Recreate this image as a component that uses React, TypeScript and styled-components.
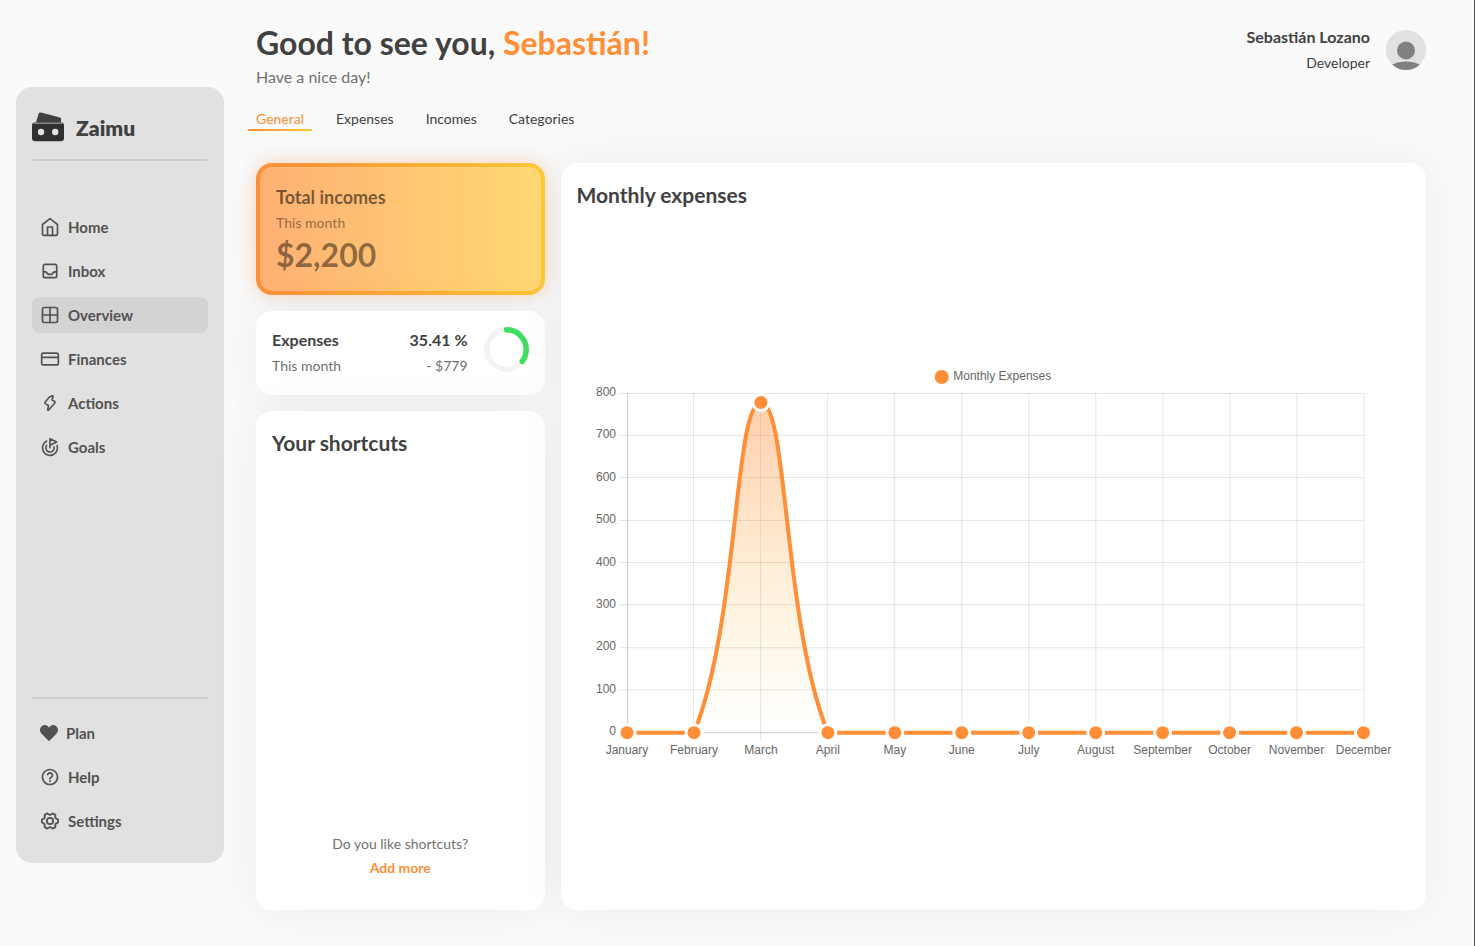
import React from "react";
import styled, { createGlobalStyle } from "styled-components";
import { FiHome } from "react-icons/fi";
import { TbInbox } from "react-icons/tb";
import { LuGrid2X2, LuCreditCard, LuGoal } from "react-icons/lu";
import { FaHeart } from "react-icons/fa";
import { MdHelpOutline } from "react-icons/md";
import { PiGearSixBold } from "react-icons/pi";

const ink = "#414141";
const orange = "#ff8e37";
const yellow = "#ffc837";

const GlobalStyle = createGlobalStyle`
  *, *::before, *::after { box-sizing: border-box; }
  body {
    margin: 0;
    background: #fafafa;
    color: ${ink};
    font-family: Lato, "Open Sans", sans-serif;
    font-size: 14px;
  }
  h1, h2, h3, p, ul { margin: 0; padding: 0; }
  ul { list-style: none; }
  a { color: inherit; text-decoration: none; }
`;

const Page = styled.div`
  display: grid;
  grid-template-columns: 224px minmax(0, 1fr);
  min-height: 100vh;
  border-right: 1px solid #505050;
`;

/* Sidebar */

const Sidebar = styled.aside`
  display: flex;
  flex-direction: column;
  margin: 87px 0 83px 16px;
  padding: 24px 16px;
  border-radius: 16px;
  background: #e1e1e1;
`;

const Brand = styled.a`
  display: flex;
  align-items: center;
  gap: 12px;
  height: 32px;
  margin-bottom: 16px;
  font-size: 21px;
  font-weight: 800;
`;

const Divider = styled.hr`
  width: 100%;
  height: 2px;
  margin: 0;
  border: 0;
  border-radius: 2px;
  background: #cdcdcd;
`;

const Nav = styled.nav<{ $bottom?: boolean }>`
  margin-top: ${(p) => (p.$bottom ? "auto" : "48px")};
`;

const NavList = styled.ul<{ $spaced?: boolean }>`
  display: flex;
  flex-direction: column;
  gap: 8px;
  margin-top: ${(p) => (p.$spaced ? "16px" : "0")};
`;

const NavLink = styled.a<{ $active?: boolean }>`
  display: flex;
  align-items: center;
  gap: 8px;
  height: 36px;
  padding: 0 8px;
  border-radius: 8px;
  background: ${(p) => (p.$active ? "#d3d3d3" : "transparent")};
  color: #525252;
  font-size: 15px;
  font-weight: 700;
`;

/* Main column */

const Main = styled.main`
  display: flex;
  flex-direction: column;
  padding: 24px 48px 36px 32px;
`;

const Header = styled.header`
  display: flex;
  justify-content: space-between;
  align-items: flex-start;
`;

const Title = styled.h1`
  font-size: 32px;
  font-weight: 700;
  line-height: 38px;
`;

const Accent = styled.span`
  color: ${orange};
`;

const Greeting = styled.p`
  color: #707070;
  font-size: 16px;
  line-height: 30px;
`;

const User = styled.div`
  display: flex;
  align-items: center;
  gap: 16px;
  text-align: right;
  line-height: 26px;
`;

const UserName = styled.p`
  font-size: 16px;
  font-weight: 700;
`;

const Avatar = styled.svg`
  display: block;
  border-radius: 50%;
`;

const Tabs = styled.nav`
  display: flex;
  gap: 16px;
  margin: 15px 0 32px -8px;
`;

const Tab = styled.a<{ $active?: boolean }>`
  padding: 0 8px;
  line-height: 24px;
  color: ${(p) => (p.$active ? orange : ink)};
  background: ${(p) =>
    p.$active ? `linear-gradient(90deg, ${orange}, ${yellow}) bottom / 100% 2px no-repeat` : "none"};
`;

const Board = styled.div`
  flex: 1;
  display: grid;
  grid-template-columns: minmax(0, 1fr) minmax(0, 3fr);
  gap: 16px;
`;

const Column = styled.div`
  display: flex;
  flex-direction: column;
  gap: 16px;
`;

const Card = styled.section<{ $grow?: boolean }>`
  display: flex;
  flex-direction: column;
  flex: ${(p) => (p.$grow ? "1" : "none")};
  padding: 16px;
  border-radius: 16px;
  background: #fff;
  box-shadow: 0 0 48px rgba(0, 0, 0, 0.06);
`;

const CardTitle = styled.h2`
  font-size: 21px;
  font-weight: 700;
  line-height: 32px;
`;

const IncomeCard = styled.section`
  padding: 16px;
  border: 4px solid transparent;
  border-radius: 16px;
  background:
    linear-gradient(rgba(255, 255, 255, 0.3), rgba(255, 255, 255, 0.3)) padding-box,
    linear-gradient(90deg, ${orange}, ${yellow}) border-box;
  box-shadow: 0 0 16px rgba(255, 142, 55, 0.3), 0 0 48px rgba(0, 0, 0, 0.05);
`;

const IncomeTitle = styled.h2`
  color: rgba(0, 0, 0, 0.55);
  font-size: 18px;
  font-weight: 700;
  line-height: 28px;
`;

const IncomePeriod = styled.p`
  color: rgba(0, 0, 0, 0.42);
  font-weight: 500;
  line-height: 24px;
`;

const IncomeAmount = styled.p`
  color: rgba(0, 0, 0, 0.45);
  font-size: 32px;
  font-weight: 700;
  line-height: 40px;
`;

const ExpenseRow = styled.div`
  display: flex;
  align-items: flex-start;
  gap: 16px;
  line-height: 26px;
`;

const ExpenseText = styled.div<{ $end?: boolean }>`
  flex: ${(p) => (p.$end ? "none" : "1")};
  text-align: ${(p) => (p.$end ? "right" : "left")};
`;

const Strong = styled.h3`
  font-size: 16px;
  font-weight: 700;
`;

const Muted = styled.p`
  color: #707070;
`;

const ShortcutHint = styled.div`
  margin-top: auto;
  padding-bottom: 14px;
  text-align: center;
  line-height: 24px;
`;

const AddLink = styled.a`
  color: ${orange};
  font-weight: 700;
`;

const ChartArea = styled.div`
  flex: 1;
  display: flex;
  align-items: center;
  padding-top: 16px;
`;

const ChartSvg = styled.svg`
  display: block;
  width: 100%;
  font-family: "Liberation Sans", Arial, sans-serif;
  font-size: 12px;
  fill: #666;
`;

function Logo() {
  return (
    <svg width="32" height="30" viewBox="0 0 32 30" aria-hidden="true">
      <path d="M6.6 1.8Q7.2 0 9 .5L28 5.4Q29.4 5.8 29.2 7.2L28.8 10.4H4Z" fill="#414141" />
      <rect x="0" y="10.4" width="32" height="18.8" rx="3" fill="#303030" />
      <path d="M2 11.5H30" stroke="#858585" strokeWidth="1" />
      <circle cx="9" cy="20" r="3.2" fill="#e1e1e1" />
      <circle cx="23.2" cy="20" r="3.2" fill="#e1e1e1" />
    </svg>
  );
}

function BoltIcon({ size }: { size: number }) {
  return (
    <svg width={size} height={size} viewBox="0 0 20 20" fill="none" stroke="currentColor" strokeWidth="1.6" strokeLinejoin="round" aria-hidden="true">
      <path d="M9.2 4.3 12.2 2.8Q13.3 2.5 13.1 3.5L12 7 14.7 8.5Q15.5 9.1 15 9.8L8.7 17Q7.6 17.8 7.7 16.5L8.5 12.5 5.3 10.6Q4.6 10 5 9.3Z" />
    </svg>
  );
}

const mainLinks = [
  { label: "Home", Icon: FiHome },
  { label: "Inbox", Icon: TbInbox },
  { label: "Overview", Icon: LuGrid2X2, active: true },
  { label: "Finances", Icon: LuCreditCard },
  { label: "Actions", Icon: BoltIcon },
  { label: "Goals", Icon: LuGoal },
];

const footLinks = [
  { label: "Plan", Icon: FaHeart, size: 18 },
  { label: "Help", Icon: MdHelpOutline },
  { label: "Settings", Icon: PiGearSixBold },
];

function ProgressRing({ value }: { value: number }) {
  return (
    <svg width="45" height="45" viewBox="0 0 45 45" fill="none" role="img" aria-label={`${value} %`}>
      <circle cx="22.5" cy="22.5" r="19.7" stroke="#f3f3f3" strokeWidth="5.5" />
      <circle
        cx="22.5"
        cy="22.5"
        r="19.7"
        stroke="#3fde61"
        strokeWidth="5.5"
        strokeLinecap="round"
        pathLength="100"
        strokeDasharray={`${value} 100`}
        transform="rotate(-90 22.5 22.5)"
      />
    </svg>
  );
}

const months = [
  "January", "February", "March", "April", "May", "June",
  "July", "August", "September", "October", "November", "December",
];
const expenses = [0, 0, 779, 0, 0, 0, 0, 0, 0, 0, 0, 0];
const plot = { left: 50, right: 786, top: 33, bottom: 372, max: 800 };
const xAt = (i: number) => plot.left + ((plot.right - plot.left) * i) / (months.length - 1);
const yAt = (v: number) => plot.bottom - ((plot.bottom - plot.top) * v) / plot.max;
const crisp = (n: number) => Math.floor(n) + 0.5;
const clampY = (y: number) => Math.max(plot.top, Math.min(plot.bottom, y));

/* Cardinal-like spline with control points held inside the plot. */
function splinePath(values: number[], tension: number) {
  const pts = values.map((v, i) => ({ x: xAt(i), y: yAt(v) }));
  const ctrl = pts.map((p, i) => {
    const a = pts[Math.max(0, i - 1)];
    const b = pts[Math.min(pts.length - 1, i + 1)];
    const da = Math.hypot(p.x - a.x, p.y - a.y);
    const db = Math.hypot(b.x - p.x, b.y - p.y);
    const fa = (tension * da) / (da + db);
    const fb = (tension * db) / (da + db);
    return {
      px: p.x - fa * (b.x - a.x), py: clampY(p.y - fa * (b.y - a.y)),
      nx: p.x + fb * (b.x - a.x), ny: clampY(p.y + fb * (b.y - a.y)),
    };
  });
  return pts
    .map((p, i) =>
      i === 0
        ? `M${p.x} ${p.y}`
        : `C${ctrl[i - 1].nx} ${ctrl[i - 1].ny} ${ctrl[i].px} ${ctrl[i].py} ${p.x} ${p.y}`
    )
    .join("");
}

function ExpensesChart() {
  const line = splinePath(expenses, 0.4);
  const ticks = [0, 100, 200, 300, 400, 500, 600, 700, 800];
  return (
    <ChartSvg viewBox="0 0 833 400" role="img" aria-label="Monthly Expenses">
      <defs>
        <linearGradient id="area" gradientUnits="userSpaceOnUse" x1="0" y1={plot.top} x2="0" y2={plot.bottom}>
          <stop offset="0" stopColor={orange} stopOpacity="0.42" />
          <stop offset="0.15" stopColor={orange} stopOpacity="0.36" />
          <stop offset="1" stopColor={yellow} stopOpacity="0" />
        </linearGradient>
      </defs>
      <circle cx="364.5" cy="17" r="7" fill={orange} />
      <text x="376" y="20">Monthly Expenses</text>
      <g stroke="#000" strokeOpacity="0.1">
        {ticks.map((t) => (
          <path key={t} d={`M${plot.left - 8} ${crisp(yAt(t))}H${plot.right}`} />
        ))}
        {months.map((m, i) => (
          <path key={m} d={`M${crisp(xAt(i))} ${plot.top}V${plot.bottom + 8}`} />
        ))}
        <path d={`M${plot.left + 0.5} ${plot.top}V${plot.bottom}M${plot.left} ${plot.bottom + 0.5}H${plot.right}`} />
      </g>
      <path d={`${line}V${plot.bottom}H${plot.left}Z`} fill="url(#area)" />
      <path d={line} fill="none" stroke={orange} strokeWidth="4" transform="translate(0 .5)" />
      {expenses.map((v, i) => (
        <circle key={i} cx={xAt(i)} cy={yAt(v) + 0.5} r="8" fill={orange} stroke="#fff" strokeWidth="3" />
      ))}
      {ticks.map((t) => (
        <text key={t} x={plot.left - 11} y={Math.round(yAt(t)) + 3} textAnchor="end">{t}</text>
      ))}
      {months.map((m, i) => (
        <text key={m} x={xAt(i)} y="394" textAnchor="middle">{m}</text>
      ))}
    </ChartSvg>
  );
}

export default function App() {
  return (
    <>
      <GlobalStyle />
      <Page>
        <Sidebar>
          <Brand href="#"><Logo />Zaimu</Brand>
          <Divider />
          <Nav aria-label="Main">
            <NavList>
              {mainLinks.map(({ label, Icon, active }) => (
                <li key={label}>
                  <NavLink href="#" $active={active}><Icon size={20} />{label}</NavLink>
                </li>
              ))}
            </NavList>
          </Nav>
          <Nav aria-label="Account" $bottom>
            <Divider />
            <NavList $spaced>
              {footLinks.map(({ label, Icon, size }) => (
                <li key={label}>
                  <NavLink href="#"><Icon size={size ?? 20} />{label}</NavLink>
                </li>
              ))}
            </NavList>
          </Nav>
        </Sidebar>
        <Main>
          <Header>
            <div>
              <Title>Good to see you, <Accent>Sebastián!</Accent></Title>
              <Greeting>Have a nice day!</Greeting>
            </div>
            <User>
              <div>
                <UserName>Sebastián Lozano</UserName>
                <p>Developer</p>
              </div>
              <Avatar width="40" height="40" viewBox="0 0 40 40" role="img" aria-label="Avatar">
                <rect width="40" height="40" fill="#e1e1e1" />
                <circle cx="20" cy="20.5" r="9" fill="#808080" />
                <ellipse cx="20" cy="41" rx="18" ry="9.5" fill="#808080" />
              </Avatar>
            </User>
          </Header>
          <Tabs aria-label="Sections">
            <Tab href="#" $active>General</Tab>
            <Tab href="#">Expenses</Tab>
            <Tab href="#">Incomes</Tab>
            <Tab href="#">Categories</Tab>
          </Tabs>
          <Board>
            <Column>
              <IncomeCard>
                <IncomeTitle>Total incomes</IncomeTitle>
                <IncomePeriod>This month</IncomePeriod>
                <IncomeAmount>$2,200</IncomeAmount>
              </IncomeCard>
              <Card>
                <ExpenseRow>
                  <ExpenseText>
                    <Strong>Expenses</Strong>
                    <Muted>This month</Muted>
                  </ExpenseText>
                  <ExpenseText $end>
                    <Strong>35.41 %</Strong>
                    <Muted>- $779</Muted>
                  </ExpenseText>
                  <ProgressRing value={35.41} />
                </ExpenseRow>
              </Card>
              <Card $grow>
                <CardTitle>Your shortcuts</CardTitle>
                <ShortcutHint>
                  <Muted>Do you like shortcuts?</Muted>
                  <AddLink href="#">Add more</AddLink>
                </ShortcutHint>
              </Card>
            </Column>
            <Card>
              <CardTitle>Monthly expenses</CardTitle>
              <ChartArea>
                <ExpensesChart />
              </ChartArea>
            </Card>
          </Board>
        </Main>
      </Page>
    </>
  );
}
